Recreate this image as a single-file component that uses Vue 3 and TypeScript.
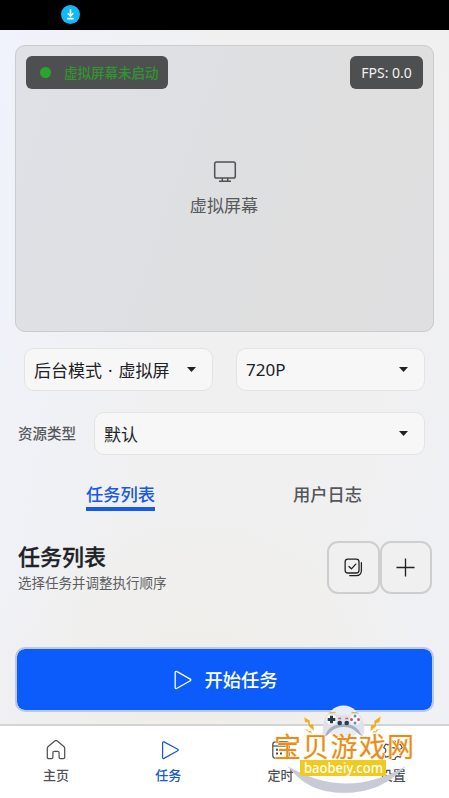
<script setup lang="ts">
import { ref } from 'vue'

const tabs = ['任务列表', '用户日志']
const activeTab = ref(0)
const navItems = [
  { key: 'home', label: '主页' },
  { key: 'task', label: '任务' },
  { key: 'timer', label: '定时' },
  { key: 'settings', label: '设置' },
]
const activeNav = ref('task')
</script>

<template>
  <div class="app">
    <header class="status">
      <svg class="download" viewBox="0 0 19 19">
        <circle cx="9.5" cy="9.5" r="9.5" fill="#10b9fa" />
        <path d="M9.5 4.2v6.6M6.7 8.3l2.8 2.8 2.8-2.8M6.3 13.6h6.4" fill="none" stroke="#fff" stroke-width="1.6" />
      </svg>
    </header>

    <main class="content">
      <section class="screen">
        <div class="badges">
          <div class="badge state"><i class="dot"></i><span>虚拟屏幕未启动</span></div>
          <div class="badge fps">FPS: 0.0</div>
        </div>
        <div class="empty">
          <svg class="monitor" viewBox="0 0 24 24" fill="none" stroke="#505154" stroke-width="1.5">
            <rect x="1.7" y="1.9" width="20.6" height="16.2" rx="1.8" />
            <path d="M9.3 18.1v3M14.7 18.1v3M6 21.3h12" />
          </svg>
          <span>虚拟屏幕</span>
        </div>
      </section>

      <div class="selects">
        <button class="select"><span>后台模式 · 虚拟屏</span><i class="caret"></i></button>
        <button class="select"><span>720P</span><i class="caret"></i></button>
      </div>
      <div class="resource">
        <label>资源类型</label>
        <button class="select"><span>默认</span><i class="caret"></i></button>
      </div>

      <nav class="tabs">
        <div v-for="(tab, i) in tabs" :key="tab" class="tab" @click="activeTab = i">
          <span :class="{ active: activeTab === i }">{{ tab }}</span>
        </div>
      </nav>

      <section class="heading">
        <div>
          <h2>任务列表</h2>
          <p>选择任务并调整执行顺序</p>
        </div>
        <div class="actions">
          <button class="square">
            <svg viewBox="0 0 20 20" fill="none" stroke="#202124" stroke-width="1.35" stroke-linecap="round" stroke-linejoin="round">
              <rect x="1.2" y="1.2" width="14.6" height="14.6" rx="3" />
              <path d="M5.2 8.9l2.6 2.5 4.6-5M18.3 5v8.5a5 5 0 0 1-5 5H6" />
            </svg>
          </button>
          <button class="square">
            <svg viewBox="0 0 20 20" fill="none" stroke="#202124" stroke-width="1.4">
              <path d="M10 .5v19M.5 10h19" />
            </svg>
          </button>
        </div>
      </section>

      <button class="start">
        <svg viewBox="0 0 18 20" fill="none" stroke="#fff" stroke-width="1.3" stroke-linejoin="round">
          <path d="M1.2 2.3c0-.8.7-1.2 1.4-.9l13.7 7.7c.7.4.7 1.3 0 1.7L2.6 18.5c-.7.4-1.4 0-1.4-.8z" />
        </svg>
        <span>开始任务</span>
      </button>
    </main>

    <footer class="bottom">
      <div
        v-for="item in navItems"
        :key="item.key"
        class="nav-item"
        :class="{ active: activeNav === item.key }"
        @click="activeNav = item.key"
      >
        <svg viewBox="0 0 20 20" fill="none" stroke="currentColor" stroke-width="1.25" stroke-linejoin="round">
          <path v-if="item.key === 'home'" d="M1.3 8.4c0-.8.3-1.4.9-1.9L8.7 1.1c.8-.6 1.8-.6 2.6 0l6.5 5.4c.6.5.9 1.1.9 1.9v8.8c0 .9-.5 1.4-1.4 1.4h-2.8c-.9 0-1.4-.5-1.4-1.4v-4.4c0-.9-.5-1.4-1.4-1.4H8.3c-.9 0-1.4.5-1.4 1.4v4.4c0 .9-.5 1.4-1.4 1.4H2.7c-.9 0-1.4-.5-1.4-1.4z" />
          <path v-else-if="item.key === 'task'" d="M3.6 2.8c0-.8.7-1.2 1.4-.9l13.7 7.4c.7.4.7 1.1 0 1.5L5 18.4c-.7.4-1.4 0-1.4-.8z" />
          <template v-else-if="item.key === 'timer'">
            <rect x="1.8" y="1.8" width="16.4" height="16.4" rx="2.8" />
            <path d="M1.8 6h16.4" />
            <path d="M5 9.8h2M9 9.8h2M13 9.8h2M5 13.6h2M9 13.6h2" stroke-width="2" />
          </template>
          <template v-else>
            <path d="M8 1h4l.6 2.7 2.1 1.2 2.6-.8 2 3.4-2 1.900v2.400l2 1.900-2 3.400-2.600-.8-2.100 1.200L12 19.500H8l-.6-2-2.100-1.200-2.600.8-2-3.400 2-1.900V9.400l-2-1.900 2-3.400 2.600.8 2.100-1.200z" />
            <circle cx="10" cy="10.5" r="2.8" />
          </template>
        </svg>
        <span>{{ item.label }}</span>
      </div>
    </footer>

    <svg class="mascot" viewBox="265 700 155 98">
      <circle cx="343.5" cy="722.5" r="17" fill="#e8edf5" />
      <path d="M287.500 766Q316 783 345 783.500T406 766C389 784 370 792.800 344 792.800S302 784 287.500 766z" fill="#c8cad8" />
      <g fill="#edaa31" stroke="#fff3d0" stroke-width=".4">
        <path d="M304 717l6 3.500 0 3.500 3.500 0 .5 7-6-5.500 0-3-3 0zM381 716l-7 5 .5 3.500-3.500 0-.5 7 6-5.500 0-3 3-.5z" />
        <path d="M303.500 729.500l4 0 1 1.500 2.500 0 1 2.500-4-1.500-1-1.500zM380.500 729l-4 .5-1 1.500-2 0-1 2 4-1 1-1.500z" />
      </g>
      <path d="M329 713.500q0-1 6.500-1M358 713.500q0-1-6.500-1" fill="none" stroke="#e5b44a" stroke-width="1.5" />
      <path d="M325 718q1-4 6-4 5-.5 8 1h9q3-1.500 8-1 5 0 6 4 4 11 1 18-4-1-6.500-4-4-6-13-6t-13 6q-3 4-7.500 5-1.500-8 2-19z" fill="#dfe2ec" />
      <path d="M324 737q2-3 4-7 5-6 15.500-6t15 6q2 4 4 6-3-1-6-4-5-5-13-5t-13 5q-3 4-6.500 5z" fill="#a9afbf" />
      <circle cx="331.5" cy="719.5" r="5.2" fill="#f8f9fb" />
      <path d="M331.500 715.700v7.600M327.700 719.500h7.600" stroke="#263c49" stroke-width="3" />
      <circle cx="355" cy="719.5" r="5.5" fill="#f8f9fb" />
      <g fill="#df4d5a"><circle cx="351.5" cy="719.5" r="1.5" /><circle cx="358.5" cy="719.5" r="1.5" /></g>
      <g fill="#38a6c8"><circle cx="355" cy="716" r="1.5" /><circle cx="355" cy="723" r="1.5" /></g>
      <path d="M338.200 718.500h3M345.200 718.500h3" stroke="#df5966" stroke-width="1.5" />
      <g fill="#263c49"><circle cx="339.7" cy="723" r="2.3" /><circle cx="346.7" cy="723" r="2.3" /></g>
      <text class="brand" x="274" y="756.5" textLength="140" lengthAdjust="spacing">宝贝游戏网</text>
      <rect x="300" y="760" width="86" height="16" fill="#edcb20" />
      <text class="url" x="304" y="772.5" textLength="79" lengthAdjust="spacingAndGlyphs">baobeiy.com</text>
    </svg>
  </div>
</template>

<style>
body { margin: 0; }
</style>

<style scoped>
* { box-sizing: border-box; }
.app {
  position: relative;
  width: 449px;
  height: 798px;
  overflow: hidden;
  display: flex;
  flex-direction: column;
  font-family: "Noto Sans", "Noto Sans CJK SC", sans-serif;
  color: #202124;
  background:
    radial-gradient(ellipse 240px 250px at 190px 740px, #f0ede7 0%, rgba(240, 237, 231, 0) 100%),
    linear-gradient(100deg, #f0f3fc 0%, #f0f0f1 38%, #f0f0f0 72%, #f0f1f6 100%);
}
button { font: inherit; color: inherit; padding: 0; margin: 0; }
.status { height: 30px; background: #000; padding: 5px 0 0 61px; flex: none; }
.download { display: block; width: 19px; height: 19px; }
.content { flex: 1; padding: 15px 15px 0; min-height: 0; }
.screen {
  width: 419px;
  height: 287px;
  border: 1.5px solid #cacbcd;
  border-radius: 10px;
  background: linear-gradient(110deg, #dfe1e7, #dedfe1 48%, #dfdfdf 75%, #dfdfe2);
  padding: 10px;
  display: flex;
  flex-direction: column;
}
.badges { display: flex; justify-content: space-between; }
.badge { height: 33px; border-radius: 6px; background: #4e4f50; display: flex; align-items: center; font-size: 13.5px; padding-bottom: 2px; }
.state { width: 142px; color: #309630; padding-left: 14px; gap: 13px; font-weight: 500; }
.dot { width: 11px; height: 11px; border-radius: 50%; background: #2aa52c; margin-top: 2px; }
.fps { width: 73px; justify-content: center; color: #f1f1f1; font-size: 14px; padding-bottom: 1px; }
.empty { display: flex; flex-direction: column; align-items: center; padding-top: 71px; color: #57585b; font-size: 17.1px; line-height: 24px; }
.monitor { width: 24px; height: 24px; margin-bottom: 10px; }
.empty span { padding-right: 1px; }
.selects { display: grid; grid-template-columns: 189px 189px; gap: 23px; padding: 16px 9px 0; }
.select {
  height: 43px;
  border: 1.5px solid #e3e3e4;
  border-radius: 10px;
  background: #f7f7f7;
  display: flex;
  align-items: center;
  justify-content: space-between;
  padding: 0 16px 0 9px;
  font-size: 17px;
  word-spacing: 1.5px;
}
.caret { width: 9px; height: 5px; background: #202124; clip-path: polygon(0 0, 100% 0, 50% 100%); }
.resource { display: flex; align-items: center; padding: 21px 9px 0 3px; color: #57585b; }
.resource label { width: 76px; font-size: 14.5px; font-weight: 500; padding-bottom: 3px; }
.resource .select { flex: 1; color: #202124; }
.tabs { height: 56px; display: grid; grid-template-columns: 207px 207px; padding-left: 2px; }
.tab { display: flex; justify-content: center; padding-top: 24px; font-size: 17.3px; font-weight: 500; line-height: 32px; color: #55565a; }
.tab span { height: 32px; }
.tab .active { color: #1759e8; border-bottom: 4px solid #1759e8; }
.heading { display: flex; justify-content: space-between; margin-top: 30px; padding: 0 2px 0 3px; }
h2 { margin: 0; font-size: 22px; line-height: 30px; font-weight: 500; -webkit-text-stroke: .3px currentColor; }
p { margin: 1px 0 0; font-size: 13.5px; line-height: 22px; color: #5c5d60; }
.actions { display: flex; gap: 0; }
.square { width: 52.5px; height: 53px; border: 2px solid #cdcecf; border-radius: 11px; background: #f0f0f0; display: flex; align-items: center; justify-content: center; }
.square svg { width: 19px; height: 19px; }
.start {
  width: 419px;
  height: 65px;
  margin-top: 53px;
  border: 2px solid #bdc8e4;
  border-radius: 10px;
  background: #0b5cfa;
  background-clip: padding-box;
  color: #fff;
  display: flex;
  align-items: center;
  justify-content: center;
  gap: 12px;
  padding: 0 0 1px 3px;
  font-size: 18.3px;
  font-weight: 500;
}
.start svg { width: 18px; height: 20px; margin-top: 2px; }
.bottom { height: 74px; flex: none; border-top: 2px solid #d3d3d3; background: #fff; display: grid; grid-template-columns: repeat(4, 1fr); }
.nav-item { display: flex; flex-direction: column; align-items: center; padding-top: 14px; color: #505154; font-size: 13px; font-weight: 500; line-height: 18px; }
.nav-item svg { width: 20px; height: 20px; margin-bottom: 6px; }
.nav-item.active { color: #1759d8; }
.nav-item.active svg { margin-left: 2px; }
.mascot { position: absolute; left: 265px; top: 700px; width: 155px; height: 98px; pointer-events: none; }
.brand { font: 400 27px "Noto Sans CJK SC", sans-serif; fill: #e78d20; stroke: #fff4d5; stroke-width: 1.2px; paint-order: stroke; }
.url { font: 500 13.5px "Noto Sans", sans-serif; fill: #fffdf0; }
</style>
